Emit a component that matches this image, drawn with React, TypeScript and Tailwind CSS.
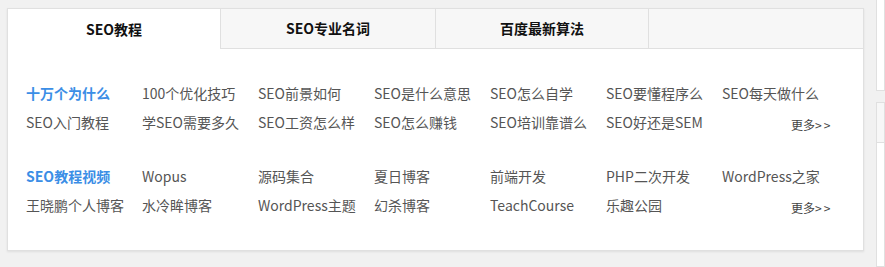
import React from "react";

const TABS = ["SEO教程", "SEO专业名词", "百度最新算法", ""];
const TAB_W = ["w-[212px]", "w-[215px]", "w-[213px]"];

const GROUPS = [
  {
    title: "十万个为什么",
    links: [
      "100个优化技巧",
      "SEO前景如何",
      "SEO是什么意思",
      "SEO怎么自学",
      "SEO要懂程序么",
      "SEO每天做什么",
      "SEO入门教程",
      "学SEO需要多久",
      "SEO工资怎么样",
      "SEO怎么赚钱",
      "SEO培训靠谱么",
      "SEO好还是SEM",
    ],
  },
  {
    title: "SEO教程视频",
    links: [
      "Wopus",
      "源码集合",
      "夏日博客",
      "前端开发",
      "PHP二次开发",
      "WordPress之家",
      "王晓鹏个人博客",
      "水冷眸博客",
      "WordPress主题",
      "幻杀博客",
      "TeachCourse",
      "乐趣公园",
    ],
  },
];

export default function App() {
  return (
    <div
      className="flex h-[267px] w-[885px] overflow-hidden bg-[#f1f1f1]"
      style={{ fontFamily: '"Noto Sans CJK SC", "Noto Sans", sans-serif' }}
    >
      <div className="ml-[7px] mt-[8px] flex h-[243px] w-[857px] flex-col border border-[#e0e0e0] bg-white shadow-[0_1px_2px_rgba(0,0,0,0.08)]">
        <div className="flex h-[40px]">
          {TABS.map((tab, i) => (
            <div
              key={i}
              className={
                i === 0
                  ? `flex ${TAB_W[i]} items-center justify-center bg-white text-[14px] font-bold text-[#111]`
                  : i === TABS.length - 1
                    ? "flex flex-1 items-center justify-center border-b border-l border-[#e0e0e0] bg-[#f7f7f7]"
                    : `flex ${TAB_W[i]} items-center justify-center border-b border-l border-[#e0e0e0] bg-[#f7f7f7] text-[14px] font-bold text-[#111]`
              }
            >
              {tab}
            </div>
          ))}
        </div>
        <div className="flex flex-col gap-[23px] pl-[18px] pt-[30px]">
          {GROUPS.map((g) => (
            <div key={g.title} className="grid grid-cols-[repeat(7,116px)] text-[14px] leading-[29px] text-[#555]">
              <a className="font-bold text-[#3b8ee6]">{g.title}</a>
              {g.links.map((l) => (
                <a key={l} className="whitespace-nowrap">
                  {l}
                </a>
              ))}
              <a className="whitespace-nowrap pl-[69px] pt-[2px] text-[12px] text-[#444]">
                更多<span className="tracking-[2px]">&gt;&gt;</span>
              </a>
            </div>
          ))}
        </div>
      </div>
      <div className="ml-[12px] flex flex-1 flex-col">
        <div className="h-[91px] border border-t-0 border-[#e0e0e0] bg-white" />
        <div className="mt-[11px] flex-1 border border-[#e0e0e0] bg-white">
          <div className="h-[40px] border-b border-[#e0e0e0] bg-[#f7f7f7]" />
        </div>
      </div>
    </div>
  );
}
